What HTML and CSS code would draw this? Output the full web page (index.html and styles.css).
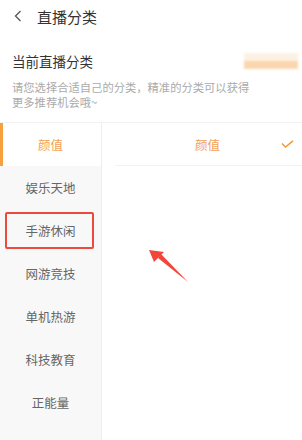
FILE: index.html
```html
<!DOCTYPE html>
<html lang="zh-CN">
<head>
    <meta charset="UTF-8">
    <meta name="viewport" content="width=device-width, initial-scale=1.0">
    <title>直播分类</title>
    <link rel="stylesheet" href="styles.css">
</head>
<body>
<div class="page">
    <header class="topbar">
        <svg class="back" width="8" height="12" viewBox="0 0 8 12">
            <path d="M6.5 1 L1.5 6 L6.5 11" fill="none" stroke="#555" stroke-width="1.3"/>
        </svg>
        <h1>直播分类</h1>
    </header>

    <div class="current">
        <span class="current-label">当前直播分类</span>
        <span class="current-value"></span>
    </div>
    <p class="tip">请您选择合适自己的分类，精准的分类可以获得更多推荐机会哦~</p>

    <div class="picker">
        <ul class="side">
            <li class="side-item active">颜值</li>
            <li class="side-item">娱乐天地</li>
            <li class="side-item marked">手游休闲<span class="mark"></span></li>
            <li class="side-item">网游竞技</li>
            <li class="side-item">单机热游</li>
            <li class="side-item">科技教育</li>
            <li class="side-item">正能量</li>
            <li class="side-item"><span class="ghost"></span></li>
        </ul>
        <ul class="sub">
            <li class="sub-item selected">
                <span>颜值</span>
                <svg class="check" width="13" height="8" viewBox="0 0 13 8">
                    <path d="M1 3.5 L4.5 7 L12 0.8" fill="none" stroke="#f29a3a" stroke-width="1.5"/>
                </svg>
            </li>
        </ul>
        <svg class="arrow" width="60" height="50" viewBox="0 0 60 50">
            <path d="M44 37 L14 13 L17 9 Z" fill="#f3463a"/>
            <path d="M5 5 L20 7 L10 17 Z" fill="#f3463a"/>
        </svg>
    </div>
</div>
</body>
</html>
```

FILE: styles.css
```css
* {
    box-sizing: border-box;
}
body {
    margin: 0;
    background: #fff;
    font-family: "Noto Sans CJK SC", "Noto Sans", sans-serif;
    color: #333;
}
ul {
    list-style: none;
    margin: 0;
    padding: 0;
}
.page {
    width: 302px;
    height: 440px;
    overflow: hidden;
    display: flex;
    flex-direction: column;
}
.page > * {
    flex-shrink: 0;
}
.topbar {
    height: 32px;
    display: flex;
    align-items: center;
    padding-left: 14px;
    gap: 15px;
}
.topbar h1 {
    margin: 0;
    font-size: 15px;
    font-weight: 400;
    color: #333;
    line-height: 1;
}
.back {
    display: block;
}
.current {
    margin-top: 18px;
    height: 22px;
    display: flex;
    align-items: center;
    justify-content: space-between;
    padding: 0 4px 0 12px;
}
.current-label {
    font-size: 13.5px;
    color: #333;
}
.current-value {
    width: 54px;
    height: 16px;
    background: linear-gradient(to bottom, #fdf1e4 0, #fdf1e4 45%, #fad5ab 55%, #fbd9b3 100%);
    filter: blur(1px);
}
.tip {
    margin: 8px 0 0;
    padding: 0 12px;
    max-width: 264px;
    font-size: 11.3px;
    line-height: 15px;
    color: #aaa;
}
.picker {
    position: relative;
    margin-top: 12px;
    flex: 1;
    display: flex;
    border-top: 1px solid #f2f2f2;
}
.side {
    width: 102px;
    background: #f8f8f8;
    border-right: 1px solid #eee;
}
.side-item {
    position: relative;
    height: 43px;
    display: flex;
    align-items: center;
    justify-content: center;
    font-size: 12.5px;
    color: #666;
}
.side-item.active {
    background: #fff;
    color: #f2a055;
    border-left: 3px solid #f7a040;
    padding-right: 3px;
}
.mark {
    position: absolute;
    left: 5px;
    right: 7px;
    top: 3px;
    bottom: 3px;
    border: 2px solid #ec4a3e;
    border-radius: 2px;
}
.ghost {
    width: 36px;
    height: 14px;
    margin-top: 26px;
    background: #ececec;
    filter: blur(1px);
}
.sub {
    flex: 1;
    padding-left: 13px;
}
.sub-item {
    height: 43px;
    display: flex;
    align-items: center;
    justify-content: center;
    position: relative;
    border-bottom: 1px solid #f2f2f2;
    font-size: 12.5px;
    color: #f2a055;
    padding-right: 2px;
}
.check {
    position: absolute;
    right: 8px;
    top: 17px;
}
.arrow {
    position: absolute;
    left: 144px;
    top: 122px;
}
```
